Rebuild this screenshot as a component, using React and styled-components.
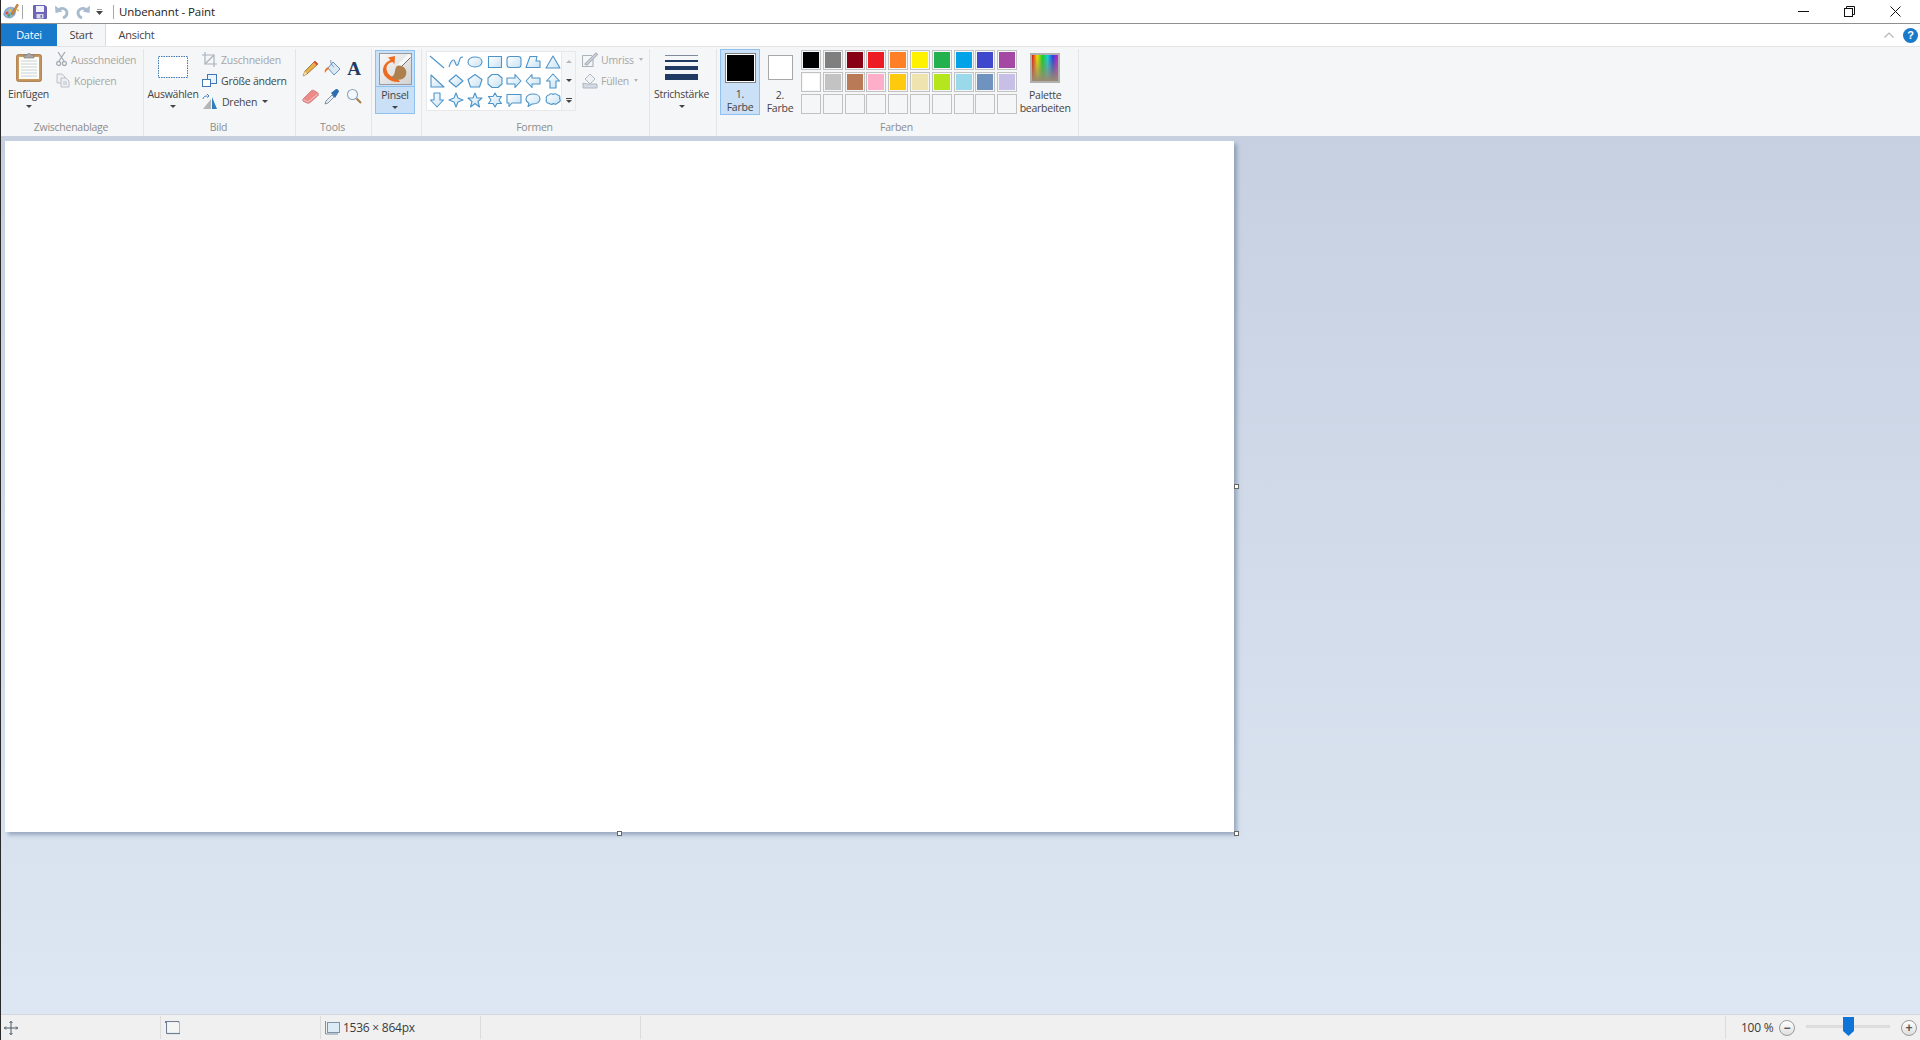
import React from "react";
import styled, { createGlobalStyle } from "styled-components";

const Global = createGlobalStyle`
  html, body { margin: 0; padding: 0; height: 100%; overflow: hidden; }
  body { font-family: "Open Sans", "Noto Sans", "Liberation Sans", sans-serif; font-size: 11px; color: #3b3b3b; letter-spacing: -0.25px; }
  #root { height: 100%; }
`;

const Win = styled.div`
  width: 1920px; height: 1040px; display: flex; flex-direction: column;
  border-left: 1px solid #2a2a2a; box-sizing: border-box; background: #fff;
`;
const TitleBar = styled.div`
  height: 24px; box-sizing: border-box; flex: none; display: flex; align-items: center; background: #fff;
  border-bottom: 1px solid #8f8f8f; padding: 0 2px 0 1px;
`;
const QuickBtn = styled.div`
  width: ${p => p.$w || 21}px; height: 23px; display: flex; align-items: center; justify-content: center; flex: none;
`;
const TitleSep = styled.div`
  width: 1px; height: 14px; background: #a8a8a8; flex: none; margin: 0 ${p => p.$r}px 0 ${p => p.$l}px;
`;
const Title = styled.div`
  font-size: 11.5px; letter-spacing: -0.1px; color: #222; flex: 1; white-space: nowrap;
`;
const WinCtrl = styled.div`
  width: 46px; height: 23px; display: flex; align-items: center; justify-content: center; flex: none;
`;
const TabRow = styled.div`
  height: 22px; flex: none; display: flex; align-items: stretch; background: #fff;
`;
const FileTab = styled.div`
  width: 56px; background: #1979ca; color: #fff; display: flex; align-items: center; justify-content: center; font-size: 11px; padding-bottom: 1px; box-sizing: border-box;
`;
const Tab = styled.div`
  width: ${p => p.$w}px; display: flex; align-items: center; justify-content: center; font-size: 11px; color: #444; padding-bottom: 1px;
  background: ${p => (p.$active ? "#f5f6f7" : "#fff")};
  border-right: ${p => (p.$active ? "1px solid #dadbdc" : "none")};
  box-sizing: border-box;
`;
const TabSpacer = styled.div`flex: 1;`;
const TabTools = styled.div`
  display: flex; align-items: center; gap: 9px; padding-right: 2px;
`;
const Help = styled.div`
  width: 15px; height: 15px; border-radius: 50%; background: #1979ca; color: #fff; font: bold 11px "Liberation Sans", sans-serif;
  display: flex; align-items: center; justify-content: center;
`;
const Ribbon = styled.div`
  height: 90px; flex: none; display: flex; background: #f5f6f7; border-top: 1px solid #e3e4e6; box-sizing: border-box;
`;
const Group = styled.div`
  width: ${p => p.$w}px; flex: none; box-sizing: border-box; display: flex; flex-direction: column;
  margin-top: 2px; border-right: 1px solid #e4e5e7;
`;
const GroupBody = styled.div`
  height: 70px; flex: none; display: flex; padding-left: ${p => p.$pl || 0}px; box-sizing: border-box;
`;
const GroupLabel = styled.div`
  flex: 1; display: flex; align-items: center; justify-content: center; color: #8d8d8d; font-size: 10.5px; padding: 0 2px 1px 0;
`;
const BigBtn = styled.div`
  width: ${p => p.$w}px; flex: none; display: flex; flex-direction: column; align-items: center; box-sizing: border-box;
  margin-left: ${p => p.$ml || 0}px;
  height: 66px; font-size: 10.5px; line-height: 13px; color: #444; text-align: center;
`;
const IconSlot = styled.div`
  height: 36px; margin-bottom: 3px; display: flex; align-items: center; justify-content: center; flex: none;
`;
const Caret = styled.div`
  width: 0; height: 0; border-left: 3px solid transparent; border-right: 3px solid transparent;
  border-top: 3px solid ${p => p.$c || "#444"}; margin: ${p => p.$m || "4px auto 0"};
`;
const SmallCol = styled.div`
  display: flex; flex-direction: column; margin-left: ${p => p.$ml || 0}px;
`;
const SmallBtn = styled.div`
  height: 21px; display: flex; align-items: center; gap: ${p => p.$gap || 4}px; font-size: 10.5px; white-space: nowrap;
  color: ${p => (p.$off ? "#a6a6a6" : "#444")};
`;
const ToolGrid = styled.div`
  display: grid; grid-template-columns: repeat(3, 22px); grid-auto-rows: 28px; justify-items: center; align-items: center;
  margin: 5px 0 0 3px; height: 56px;
`;
const LetterA = styled.span`
  font: bold 19px "Liberation Serif", serif; color: #1f3a63; line-height: 1;
`;
const Pinsel = styled.div`
  width: 40px; height: 64px; margin: 1px 0 0 3px; background: #c9e0f7; border: 1px solid #90c0ee; box-sizing: border-box;
  display: flex; flex-direction: column; align-items: center; font-size: 10.5px; color: #444;
`;
const PinselTop = styled.div`
  height: 36px; width: 100%; flex: none; box-sizing: border-box; border-bottom: 1px solid #90c0ee; display: flex; align-items: center; justify-content: center;
`;
const PinselIcon = styled.div`
  width: 33px; height: 32px; border: 1px solid #9a9a9a; box-sizing: border-box; background: linear-gradient(135deg,#f8f8f8,#d2d2d2); display: flex;
`;
const PinselText = styled.div`
  margin-top: 2px; line-height: 13px;
`;
const Gallery = styled.div`
  display: flex; margin: 2px 0 0 4px; height: 60px;
`;
const GalleryGrid = styled.div`
  width: 136px; background: #fff; border: 1px solid #e6e8ea; box-sizing: border-box; display: grid;
  grid-template-columns: repeat(7, 19.33px); grid-auto-rows: 19.4px; align-items: center; justify-items: center;
`;
const Scroller = styled.div`
  width: 13px; border: 1px solid #e6e8ea; border-left: 0; display: grid; grid-auto-rows: 1fr; justify-items: center; align-items: center;
`;
const ScrollCell = styled.div`
  display: flex; flex-direction: column; align-items: center; gap: 1px;
`;
const ScrollTri = styled.div`
  width: 0; height: 0; border-left: 3px solid transparent; border-right: 3px solid transparent;
  ${p => (p.$up ? `border-bottom: 3px solid ${p.$c};` : `border-top: 3px solid ${p.$c};`)}
`;
const ScrollBar = styled.div`width: 6px; height: 1px; background: #444;`;
const MiniCaret = styled.div`
  width: 0; height: 0; border-left: 2.5px solid transparent; border-right: 2.5px solid transparent; border-top: 3px solid #b5b5b5; margin-left: 2px;
`;
const LineStack = styled.div`
  width: 33px; display: flex; flex-direction: column; gap: 4px;
`;
const StrokeLine = styled.div`
  height: ${p => p.$h}px; background: ${p => p.$c || "#1f3a63"};
`;
const ColorBtn = styled.div`
  width: 40px; height: 66px; flex: none; box-sizing: border-box; display: flex; flex-direction: column; align-items: center;
  text-align: center; font-size: 10.5px; line-height: 13px; color: #444;
  ${p => p.$active && "background:#c9e0f7;border:1px solid #90c0ee;"}
`;
const C1Outer = styled.div`
  width: 31px; height: 31px; margin-top: 3px; border: 1px solid #808080; padding: 1px; box-sizing: border-box; background: #fff;
`;
const C1Inner = styled.div`width: 100%; height: 100%; background: #000;`;
const C2Box = styled.div`
  width: 25px; height: 25px; margin: 6px 0 3px; border: 1px solid #a8a8a8; background: #fff; box-sizing: border-box;
`;
const ColorLabel = styled.div`margin-top: ${p => p.$mt}px;`;
const Swatches = styled.div`
  display: grid; grid-template-columns: repeat(10, 20px); grid-auto-rows: 20px; gap: 1.8px; margin: 1px 0 0 1px; align-self: flex-start;
`;
const Swatch = styled.div`
  border: 1px solid #c2c2c2; box-shadow: inset 0 0 0 1px #f5f6f7; box-sizing: border-box; background: ${p => p.$c};
`;
const PaletteBox = styled.div`
  width: 30px; height: 30px; margin: 4px 0 6px; border: 2px solid #b0b0b0; box-sizing: border-box; flex: none;
  background: linear-gradient(to bottom, transparent, #9a8a70), linear-gradient(to right,#e01010,#f0e000,#10d020,#10d0e0,#2040e0,#e010d0);
`;
const Workspace = styled.div`
  flex: 1; background: linear-gradient(#c6d0e1, #dde7f3); padding: 4px 0 0 4px; border-top: 1px solid #c7d0de; position: relative;
`;
const Canvas = styled.div`
  width: 1229px; height: 691px; background: #fff; position: relative;
  box-shadow: 3px 3px 4px rgba(100,120,150,.55);
`;
const Handle = styled.div`
  position: absolute; width: 3px; height: 3px; border: 1px solid #666; background: #fff; left: ${p => p.$x}; top: ${p => p.$y};
`;
const Status = styled.div`
  height: 26px; flex: none; display: flex; background: #f0f0f0; border-top: 1px solid #d4d8de; box-sizing: border-box; align-items: stretch;
  font-size: 12px; color: #3b3b3b;
`;
const Cell = styled.div`
  width: ${p => p.$w}px; flex: ${p => (p.$grow ? 1 : "none")}; box-sizing: border-box; display: flex; align-items: center; gap: 3px;
  border-right: ${p => (p.$noline ? "none" : "1px solid #dcdcdc")}; padding-left: ${p => p.$pl || 0}px; margin: 1px 0;
`;
const ZoomPanel = styled.div`
  width: 194px; flex: none; box-sizing: border-box; display: flex; align-items: center; padding-left: 15px; white-space: nowrap;
`;
const ZoomText = styled.span`width: 38px; flex: none;`;
const ZoomRound = styled.div`
  width: 16px; height: 16px; border-radius: 50%; border: 1px solid #9a9a9a; box-sizing: border-box; background: linear-gradient(#fff,#dedede);
  color: #555; display: flex; align-items: center; justify-content: center; font: bold 12px/1 "Liberation Sans", sans-serif; flex: none;
`;
const Track = styled.div`
  width: 84px; height: 3px; background: #e1e1e1; border: 1px solid #dadada; box-sizing: border-box; margin: -2px 11px 0; position: relative; flex: none;
`;
const Thumb = styled.svg`
  position: absolute; left: 36px; top: -9px;
`;

const Grad = () => (
  <svg width="0" height="0" style={{ position: "absolute" }}>
    <defs>
      <linearGradient id="sh" x1="0" y1="0" x2="1" y2="1">
        <stop offset="0" stopColor="#fff" />
        <stop offset="1" stopColor="#c8e2f3" />
      </linearGradient>
    </defs>
  </svg>
);

const shapes = [
  "M1 2L15 14",
  "M1 13C3 6 6 4 7 8S10 13 11 8S13 3 15 3",
  "M8 3C12 3 15 5 15 8S12 13 8 13S1 11 1 8S4 3 8 3Z",
  "M1.5 2.5H14.5V13.5H1.5Z",
  "M4 2.5H12Q15 2.5 15 5V11Q15 13.5 12 13.5H4Q1 13.5 1 11V5Q1 2.5 4 2.5Z",
  "M5 2.5H12L11 7H15V13.5H1Z",
  "M8 2L15 14H1Z",
  "M2 2L15 14H2Z",
  "M8 2L15 8L8 14L1 8Z",
  "M8 1.5L15 6.5L12.5 14H3.5L1 6.5Z",
  "M5 1.5H11L15 5V11L11 14.5H5L1 11V5Z",
  "M1 5H9V1.5L15 8L9 14.5V11H1Z",
  "M15 5H7V1.5L1 8L7 14.5V11H15Z",
  "M8 1L14.5 8H11V15H5V8H1.5Z",
  "M5 1H11V8H14.5L8 15L1.5 8H5Z",
  "M8 1L10 6L15 8L10 10L8 15L6 10L1 8L6 6Z",
  "M8 1L10 6H15L11 9.5L12.5 15L8 11.5L3.5 15L5 9.5L1 6H6Z",
  "M8 1L10 4.5H14.5L12 8L14.5 11.5H10L8 15L6 11.5H1.5L4 8L1.5 4.5H6Z",
  "M1 2.5H15V11H6L3 14.5V11H1Z",
  "M8 2C12 2 15 4 15 7S12 12 8 12H7L3 14.5L4 11.2C2 10.2 1 8.8 1 7C1 4 4 2 8 2Z",
  "M4 3C5 1.5 7 1.5 8 2.5C9.5 1.5 11.5 1.5 12.5 3C14.5 3 15.5 5 14.5 6.5C16 8 15 10.5 13 10.5C12 12.5 9.5 12.5 8.5 11.5C7 12.8 5 12.5 4 11.2C2 11.5 .5 9.5 1.5 7.5C.5 5.5 2 3 4 3Z",
];

const Shape = ({ d }) => (
  <svg width="16" height="16" viewBox="0 0 16 16">
    <path d={d} fill="url(#sh)" stroke="#4d94c9" strokeWidth="1.1" strokeLinejoin="round" />
  </svg>
);

const row1 = ["#000000", "#7f7f7f", "#880015", "#ed1c24", "#ff7f27", "#fff200", "#22b14c", "#00a2e8", "#3f48cc", "#a349a4"];
const row2 = ["#ffffff", "#c3c3c3", "#b97a57", "#ffaec9", "#ffc90e", "#efe4b0", "#b5e61d", "#99d9ea", "#7092be", "#c8bfe7"];
const row3 = Array(10).fill("#f5f6f7");

const PaintLogo = () => (
  <svg width="16" height="17" viewBox="0 0 16 17">
    <path d="M1 10C2 5 7 3 11 5C14 9 12 14 7 15C3 15 0 13 1 10Z" fill="#8fb4dc" stroke="#6488b4" strokeWidth=".6" />
    <circle cx="4" cy="10" r="1.5" fill="#e0503a" />
    <circle cx="7" cy="7.5" r="1.4" fill="#f0c030" />
    <circle cx="6" cy="12.5" r="1.4" fill="#50a850" />
    <path d="M8 11L14 1L15.5 2L10 12Z" fill="#d98a3a" stroke="#8a5a20" strokeWidth=".5" />
    <path d="M13 6L16 8" stroke="#e0b040" strokeWidth="1.4" />
  </svg>
);
const SaveIcon = () => (
  <svg width="14" height="14" viewBox="0 0 14 14">
    <path d="M.5 .5H12L13.5 2V13.5H.5Z" fill="#6f64b8" stroke="#5a4fa0" strokeWidth=".8" />
    <rect x="3" y="1" width="8" height="6" fill="#eef0fa" />
    <rect x="3.5" y="9" width="7" height="4.5" fill="#d6d6e6" />
    <rect x="7.5" y="10" width="1.5" height="2.6" fill="#6f64b8" />
  </svg>
);
const Undo = ({ flip }) => (
  <svg width="14" height="14" viewBox="0 0 14 14" style={flip ? { transform: "scaleX(-1)" } : undefined}>
    <path d="M4 4.5C8 2 12 4.5 12 8C12 10.5 10.5 12 8 13" fill="none" stroke="#a9bccf" strokeWidth="2.8" />
    <path d="M0 .5L.5 8L7.5 6.5Z" fill="#a9bccf" />
  </svg>
);
const Clipboard = () => (
  <svg width="26" height="30" viewBox="0 0 26 30">
    <rect x=".7" y="2.7" width="24.6" height="26.6" rx="1.5" fill="#c89a62" stroke="#a5733c" />
    <rect x="3" y="5" width="20" height="22" fill="#fdfdf6" />
    <path d="M5 9H21M5 12H21M5 15H21M5 18H21M5 21H21M5 24H21" stroke="#c6d0e0" />
    <path d="M8 3H11C11 1 15 1 15 3H18V6H8Z" fill="#a8a8a8" stroke="#777" strokeWidth=".6" />
  </svg>
);
const Scissors = () => (
  <svg width="11" height="15" viewBox="0 0 11 15" fill="none" stroke="#a8adb5" strokeWidth="1.3">
    <path d="M3 9L9 0M8 9L2 0" />
    <circle cx="2.6" cy="11.5" r="2" />
    <circle cx="8.4" cy="11.5" r="2" />
  </svg>
);
const CopyIcon = () => (
  <svg width="14" height="15" viewBox="0 0 14 15" fill="#eef0f3" stroke="#b4bac2" strokeWidth=".9">
    <path d="M1 1H6L9 4V10H1Z" />
    <path d="M5 5H10L13 8V14H5Z" />
    <path d="M7 9H11M7 11H11" />
  </svg>
);
const CropIcon = () => (
  <svg width="15" height="15" viewBox="0 0 15 15" fill="none" stroke="#a9b2bd" strokeWidth="1.2">
    <path d="M3 0V12H15M0 3H12V15" />
    <path d="M3 12L12 3" />
  </svg>
);
const ResizeIcon = () => (
  <svg width="15" height="15" viewBox="0 0 15 15">
    <rect x="5.5" y="1.5" width="9" height="9" fill="#e8f3fb" stroke="#3f78b5" />
    <rect x=".5" y="6.5" width="8" height="7" fill="#fff" stroke="#3f78b5" />
  </svg>
);
const RotateIcon = () => (
  <svg width="16" height="16" viewBox="0 0 16 16">
    <path d="M9 5L9 15H1Z" fill="#b5b5b5" />
    <path d="M10 3L15 15H10Z" fill="#2e7cc4" />
    <path d="M1 5C1 3 3 2 5 2M5 0L7 2L5 3.5" fill="none" stroke="#2e7cc4" strokeWidth="1" />
  </svg>
);
const Pencil = () => (
  <svg width="17" height="17" viewBox="0 0 17 17">
    <path d="M13 1L16 4L5 14L1 16L3 11Z" fill="#e8b04a" stroke="#8a6a30" strokeWidth=".8" />
    <path d="M3 11L5 14L1 16Z" fill="#f3dcb2" />
    <path d="M13 1L16 4L14.6 5.3L11.6 2.3Z" fill="#e0503a" />
  </svg>
);
const Bucket = () => (
  <svg width="17" height="18" viewBox="0 0 17 18">
    <path d="M9 3L16 10L10 16L4 9Z" fill="#dbe9f6" stroke="#6a93bb" />
    <path d="M7 1C6 3 8 7 10 8" fill="none" stroke="#6a93bb" />
    <path d="M4 8C2 9 0 11 1 14C2 12 3 11 5 10Z" fill="#f07a2a" />
  </svg>
);
const Eraser = () => (
  <svg width="17" height="15" viewBox="0 0 17 15">
    <path d="M1 10L9 2C10 1 11 1 12 1.6L16 4C16.6 5 16.5 6 15.6 7L8 13.6C7 14.4 6 14.4 5 14L1.6 12.4C.7 11.8 .5 11 1 10Z" fill="#ec8a8a" stroke="#c96a6a" strokeWidth=".7" />
    <path d="M1.5 10.6L6 13L15.6 5" fill="none" stroke="#f6c8c8" />
  </svg>
);
const Dropper = () => (
  <svg width="16" height="17" viewBox="0 0 16 17">
    <path d="M1 16L2 13L8 7L10 9L4 15Z" fill="#e8eef5" stroke="#6a7a90" strokeWidth=".8" />
    <path d="M7 5L12 1C13 .5 15 2 15 3.5L11 10Z" fill="#2d6cae" />
  </svg>
);
const Magnifier = () => (
  <svg width="16" height="16" viewBox="0 0 16 16" fill="none">
    <circle cx="6.5" cy="6.5" r="5" fill="#f4f9fd" stroke="#8aa3bd" strokeWidth="1.1" />
    <path d="M10.5 10.5L15 15" stroke="#a87a45" strokeWidth="2" />
  </svg>
);
const BrushArt = () => (
  <svg width="31" height="30" viewBox="0 0 31 30">
    <path d="M30 1L18 13" stroke="#f7f7f7" strokeWidth="4" />
    <path d="M30.5 3.5L20 14" stroke="#6f6f6f" strokeWidth="1" />
    <path d="M15 2L8 3.5L10.5 6C3 9 0 18 7 24C10 27 15 28.5 20 28L17 24C12 24 6.5 20 6.5 14.5C6.5 11 9 8.5 12.5 8L14.5 10Z" fill="#ee6a1f" />
    <path d="M17 12C22 10 28 15 26 21C24 27 15 27 11 23C16 22 14 15 17 12Z" fill="#ae8050" />
  </svg>
);
const OutlineIcon = () => (
  <svg width="16" height="15" viewBox="0 0 16 15" fill="none" stroke="#aab2bc" strokeWidth="1.1">
    <path d="M.5 3.5H10M.5 3.5V14.5H11V7" />
    <path d="M3 12L14 1L15.5 2.5L5 13Z" fill="#d7dde4" />
  </svg>
);
const FillIcon = () => (
  <svg width="16" height="16" viewBox="0 0 16 16" stroke="#aab2bc" strokeWidth=".9">
    <path d="M1 15V10L5 11H15V15Z" fill="#d4dbe4" />
    <path d="M8 1L13 6L8 11L3 6Z" fill="#eef1f5" />
  </svg>
);
const MoveIcon = () => (
  <svg width="14" height="14" viewBox="0 0 14 14" fill="none" stroke="#4a5a6a" strokeWidth="1">
    <path d="M7 0V14M0 7H14" />
    <path d="M5.5 2L7 .5L8.5 2M5.5 12L7 13.5L8.5 12M2 5.5L.5 7L2 8.5M12 5.5L13.5 7L12 8.5" />
  </svg>
);
const SelectStatus = () => (
  <svg width="15" height="14" viewBox="0 0 15 14" fill="none">
    <path d="M.5 0V2M0 .5H14V12.5H1.5V1" stroke="#6d7f90" strokeWidth="1" />
    <rect x="3" y="2" width="11" height="10" fill="#f5f5f5" />
    <path d="M2 12.5H15" stroke="#6d7f90" strokeWidth="1.2" />
  </svg>
);
const SizeStatus = () => (
  <svg width="15" height="14" viewBox="0 0 15 14">
    <rect x="2.5" y="1.5" width="12" height="10" fill="#dcecf6" stroke="#7f93a5" />
    <path d="M.5 0V13H13" fill="none" stroke="#7f93a5" />
  </svg>
);

export default function App() {
  return (
    <Win>
      <Global />
      <Grad />
      <TitleBar>
        <QuickBtn $w={18}><PaintLogo /></QuickBtn>
        <TitleSep $l={2} $r={6} />
        <QuickBtn $w={22}><SaveIcon /></QuickBtn>
        <QuickBtn $w={21}><Undo /></QuickBtn>
        <QuickBtn $w={21}><Undo flip /></QuickBtn>
        <QuickBtn $w={12}>
          <svg width="7" height="6" viewBox="0 0 7 6"><path d="M1 0H6" stroke="#444" /><path d="M0 2H7L3.5 6Z" fill="#444" /></svg>
        </QuickBtn>
        <TitleSep $l={8} $r={5} />
        <Title>Unbenannt - Paint</Title>
        <WinCtrl><svg width="11" height="2"><rect width="11" height="1" fill="#111" /></svg></WinCtrl>
        <WinCtrl>
          <svg width="11" height="11" viewBox="0 0 11 11" fill="none" stroke="#111"><rect x=".5" y="2.5" width="8" height="8" /><path d="M2.5 2.5V.5H10.5V8.5H8.5" /></svg>
        </WinCtrl>
        <WinCtrl>
          <svg width="11" height="11" viewBox="0 0 11 11" stroke="#111"><path d="M.5 .5L10.5 10.5M10.5 .5L.5 10.5" /></svg>
        </WinCtrl>
      </TitleBar>
      <TabRow>
        <FileTab>Datei</FileTab>
        <Tab $w={49} $active>Start</Tab>
        <Tab $w={61}>Ansicht</Tab>
        <TabSpacer />
        <TabTools>
          <svg width="10" height="6" viewBox="0 0 10 6" fill="none" stroke="#b5b5b5" strokeWidth="1.2"><path d="M.5 5.5L5 1L9.5 5.5" /></svg>
          <Help>?</Help>
        </TabTools>
      </TabRow>
      <Ribbon>
        <Group $w={143}>
          <GroupBody>
            <BigBtn $w={55}>
              <IconSlot><Clipboard /></IconSlot>
              <div>Einfügen</div>
              <Caret />
            </BigBtn>
            <SmallCol>
              <SmallBtn $off><Scissors /><span>Ausschneiden</span></SmallBtn>
              <SmallBtn $off><CopyIcon /><span>Kopieren</span></SmallBtn>
            </SmallCol>
          </GroupBody>
          <GroupLabel>Zwischenablage</GroupLabel>
        </Group>
        <Group $w={152}>
          <GroupBody>
            <BigBtn $w={58}>
              <IconSlot>
                <svg width="30" height="22" viewBox="0 0 30 22"><rect x=".5" y=".5" width="29" height="21" fill="#fff" stroke="#3f78b5" strokeDasharray="1.5 1" /></svg>
              </IconSlot>
              <div>Auswählen</div>
              <Caret />
            </BigBtn>
            <SmallCol>
              <SmallBtn $off><CropIcon /><span>Zuschneiden</span></SmallBtn>
              <SmallBtn><ResizeIcon /><span>Größe ändern</span></SmallBtn>
              <SmallBtn><RotateIcon /><span>Drehen</span><Caret $m="0 0 0 1px" /></SmallBtn>
            </SmallCol>
          </GroupBody>
          <GroupLabel>Bild</GroupLabel>
        </Group>
        <Group $w={76}>
          <GroupBody>
            <ToolGrid>
              <Pencil /><Bucket /><LetterA>A</LetterA>
              <Eraser /><Dropper /><Magnifier />
            </ToolGrid>
          </GroupBody>
          <GroupLabel>Tools</GroupLabel>
        </Group>
        <Group $w={50}>
          <GroupBody>
            <Pinsel>
              <PinselTop><PinselIcon><BrushArt /></PinselIcon></PinselTop>
              <PinselText>Pinsel</PinselText>
              <Caret />
            </Pinsel>
          </GroupBody>
          <GroupLabel />
        </Group>
        <Group $w={228}>
          <GroupBody>
            <Gallery>
              <GalleryGrid>
                {shapes.map((d, i) => <Shape key={i} d={d} />)}
              </GalleryGrid>
              <Scroller>
                <ScrollCell><ScrollTri $up $c="#b8b8b8" /></ScrollCell>
                <ScrollCell><ScrollTri $c="#444" /></ScrollCell>
                <ScrollCell><ScrollBar /><ScrollTri $c="#444" /></ScrollCell>
              </Scroller>
            </Gallery>
            <SmallCol $ml={6}>
              <SmallBtn $off $gap={3}><OutlineIcon /><span>Umriss</span><MiniCaret /></SmallBtn>
              <SmallBtn $off $gap={3}><FillIcon /><span>Füllen</span><MiniCaret /></SmallBtn>
            </SmallCol>
          </GroupBody>
          <GroupLabel>Formen</GroupLabel>
        </Group>
        <Group $w={67}>
          <GroupBody>
            <BigBtn $w={63}>
              <IconSlot>
                <LineStack>
                  <StrokeLine $h={1} $c="#7f8a9a" />
                  <StrokeLine $h={2} />
                  <StrokeLine $h={4} />
                  <StrokeLine $h={6} />
                </LineStack>
              </IconSlot>
              <div>Strichstärke</div>
              <Caret />
            </BigBtn>
          </GroupBody>
          <GroupLabel />
        </Group>
        <Group $w={362}>
          <GroupBody $pl={3}>
            <ColorBtn $active>
              <C1Outer><C1Inner /></C1Outer>
              <ColorLabel $mt={5}>1.<br />Farbe</ColorLabel>
            </ColorBtn>
            <ColorBtn>
              <C2Box />
              <ColorLabel $mt={6}>2.<br />Farbe</ColorLabel>
            </ColorBtn>
            <Swatches>
              {[...row1, ...row2, ...row3].map((c, i) => <Swatch key={i} $c={c} />)}
            </Swatches>
            <BigBtn $w={54} $ml={1}>
              <PaletteBox />
              <div>Palette<br />bearbeiten</div>
            </BigBtn>
          </GroupBody>
          <GroupLabel>Farben</GroupLabel>
        </Group>
      </Ribbon>
      <Workspace>
        <Canvas>
          <Handle $x="1229px" $y="343px" />
          <Handle $x="612px" $y="690px" />
          <Handle $x="1229px" $y="690px" />
        </Canvas>
      </Workspace>
      <Status>
        <Cell $w={160} $pl={3}><MoveIcon /></Cell>
        <Cell $w={160} $pl={4}><SelectStatus /></Cell>
        <Cell $w={160} $pl={4}><SizeStatus /><span>1536 × 864px</span></Cell>
        <Cell $w={160} />
        <Cell $grow />
        <ZoomPanel>
          <ZoomText>100 %</ZoomText>
          <ZoomRound>−</ZoomRound>
          <Track>
            <Thumb width="11" height="19" viewBox="0 0 11 19"><path d="M0 0H11V14L5.5 19L0 14Z" fill="#0f74d8" /></Thumb>
          </Track>
          <ZoomRound>+</ZoomRound>
        </ZoomPanel>
      </Status>
    </Win>
  );
}
